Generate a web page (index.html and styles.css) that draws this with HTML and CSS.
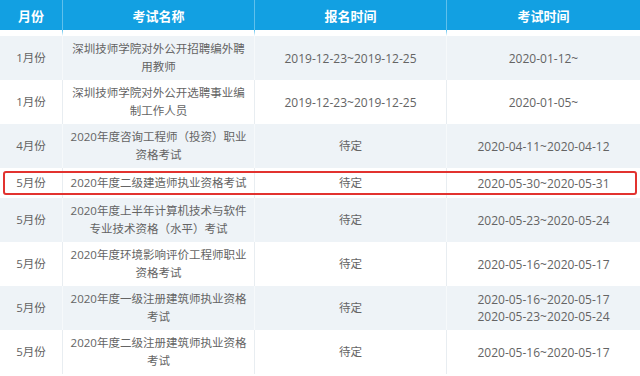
FILE: index.html
```html
<!DOCTYPE html>
<html lang="zh-CN">
<head>
<meta charset="utf-8">
<title>考试时间表</title>
<link rel="stylesheet" href="styles.css">
</head>
<body>
<table class="exam-table">
  <colgroup>
    <col class="c-month">
    <col class="c-name">
    <col class="c-reg">
    <col class="c-exam">
  </colgroup>
  <thead>
    <tr>
      <th>月份</th>
      <th>考试名称</th>
      <th>报名时间</th>
      <th>考试时间</th>
    </tr>
  </thead>
  <tbody>
    <tr class="alt">
      <td>1月份</td>
      <td>深圳技师学院对外公开招聘编外聘<br>用教师</td>
      <td class="date">2019-12-23~2019-12-25</td>
      <td class="date">2020-01-12~</td>
    </tr>
    <tr>
      <td>1月份</td>
      <td>深圳技师学院对外公开选聘事业编<br>制工作人员</td>
      <td class="date">2019-12-23~2019-12-25</td>
      <td class="date">2020-01-05~</td>
    </tr>
    <tr class="alt">
      <td>4月份</td>
      <td>2020年度咨询工程师（投资）职业<br>资格考试</td>
      <td>待定</td>
      <td class="date">2020-04-11~2020-04-12</td>
    </tr>
    <tr class="single highlight">
      <td>5月份</td>
      <td>2020年度二级建造师执业资格考试</td>
      <td>待定</td>
      <td class="date">2020-05-30~2020-05-31</td>
    </tr>
    <tr class="alt">
      <td>5月份</td>
      <td>2020年度上半年计算机技术与软件<br>专业技术资格（水平）考试</td>
      <td>待定</td>
      <td class="date">2020-05-23~2020-05-24</td>
    </tr>
    <tr>
      <td>5月份</td>
      <td>2020年度环境影响评价工程师职业<br>资格考试</td>
      <td>待定</td>
      <td class="date">2020-05-16~2020-05-17</td>
    </tr>
    <tr class="alt">
      <td>5月份</td>
      <td>2020年度一级注册建筑师执业资格<br>考试</td>
      <td>待定</td>
      <td class="date">2020-05-16~2020-05-17<br>2020-05-23~2020-05-24</td>
    </tr>
    <tr>
      <td>5月份</td>
      <td>2020年度二级注册建筑师执业资格<br>考试</td>
      <td>待定</td>
      <td class="date">2020-05-16~2020-05-17</td>
    </tr>
  </tbody>
</table>
</body>
</html>
```

FILE: styles.css
```css
html, body {
  margin: 0;
  padding: 0;
  background: #ffffff;
}

.exam-table {
  width: 640px;
  border-collapse: separate;
  border-spacing: 0;
  table-layout: fixed;
  font-family: "Open Sans", "Noto Sans CJK SC", sans-serif;
  color: #646464;
}

.c-month { width: 63px; }
.c-name { width: 192px; }
.c-reg { width: 192px; }
.c-exam { width: 193px; }

.exam-table th {
  height: 30px;
  padding: 0;
  background: #12a0e2;
  color: #ffffff;
  font-family: "Noto Sans CJK SC", sans-serif;
  font-size: 13px;
  font-weight: 700;
  text-align: center;
  vertical-align: middle;
  border-right: 1px solid #5fc0ec;
  border-bottom: 6px solid #ffffff;
  box-sizing: content-box;
}

.exam-table th:last-child {
  border-right: none;
}

.exam-table td {
  padding: 4px 6px;
  font-size: 11.5px;
  line-height: 18px;
  text-align: center;
  vertical-align: middle;
  white-space: nowrap;
  border-right: 1px solid #e8edf1;
}

.exam-table td:last-child {
  border-right: none;
}

.exam-table td.date {
  font-size: 12px;
  line-height: 17px;
}

.exam-table tbody tr {
  height: 44px;
}

.exam-table tbody tr.single {
  height: 30px;
}

.exam-table tr.alt td {
  background: #eef3f7;
  border-right-color: #f6f9fb;
}

.highlight {
  position: relative;
}

.highlight::after {
  content: "";
  position: absolute;
  top: 3px;
  bottom: 3px;
  left: 3px;
  right: 3px;
  border: 2px solid #e2322f;
  border-radius: 3px;
  pointer-events: none;
}
```
